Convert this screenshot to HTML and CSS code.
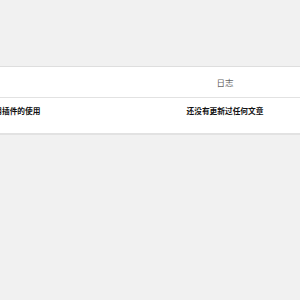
FILE: index.html
```html
<!DOCTYPE html>
<html lang="zh-CN">
<head>
  <meta charset="UTF-8">
  <title>日志</title>
  <link rel="stylesheet" href="styles.css">
</head>
<body>
  <div class="panel">
    <div class="row head">
      <div class="cell left"></div>
      <div class="cell right">日志</div>
    </div>
    <div class="row body">
      <div class="cell left"><span class="clip">常用插件的使用</span></div>
      <div class="cell right">还没有更新过任何文章</div>
    </div>
  </div>
</body>
</html>
```

FILE: styles.css
```css
body { margin: 0; background: #f1f1f1; font-family: "Noto Sans CJK SC", "Noto Sans", sans-serif; font-size: 7.7px; overflow: hidden; }
.panel { margin-top: 66px; background: #fff; border-top: 1px solid #dedede; border-bottom: 2px solid #e2e2e2; }
.row { display: grid; grid-template-columns: 150px 150px; }
.head { height: 30px; align-items: center; border-bottom: 1px solid #e2e2e2; }
.head .right { color: #666; text-align: center; font-size: 8.5px; }
.body { height: 35px; align-items: start; font-weight: bold; color: #111; }
.body .cell { padding-top: 7px; }
.left { overflow: hidden; white-space: nowrap; }
.clip { display: block; margin-left: -13.4px; }
.body .right { text-align: center; }
```
